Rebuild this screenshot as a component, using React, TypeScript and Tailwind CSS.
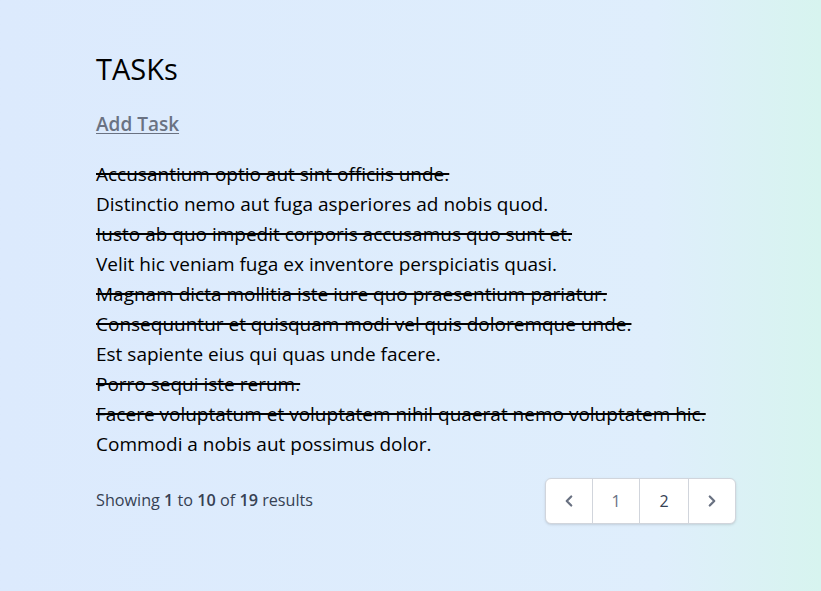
import { ChevronLeft, ChevronRight } from 'lucide-react'

interface Task {
  title: string
  done: boolean
}

const tasks: Task[] = [
  { title: 'Accusantium optio aut sint officiis unde.', done: true },
  { title: 'Distinctio nemo aut fuga asperiores ad nobis quod.', done: false },
  { title: 'Iusto ab quo impedit corporis accusamus quo sunt et.', done: true },
  { title: 'Velit hic veniam fuga ex inventore perspiciatis quasi.', done: false },
  { title: 'Magnam dicta mollitia iste iure quo praesentium pariatur.', done: true },
  { title: 'Consequuntur et quisquam modi vel quis doloremque unde.', done: true },
  { title: 'Est sapiente eius qui quas unde facere.', done: false },
  { title: 'Porro sequi iste rerum.', done: true },
  { title: 'Facere voluptatum et voluptatem nihil quaerat nemo voluptatem hic.', done: true },
  { title: 'Commodi a nobis aut possimus dolor.', done: false },
]

export default function App() {
  return (
    <div className="min-h-[591px] w-full bg-gradient-to-r from-[#dceafd] via-[#dfeefc] via-80% to-[#d7f4ef] font-['Open_Sans',sans-serif] text-black">
      <div className="pl-24 pr-[85px] pt-[51px] pb-16">
        <h1 className="text-[29px] leading-9">TASKs</h1>

        <a href="#" className="inline-block mt-[23px] text-[19px] font-semibold text-gray-500 underline underline-offset-2">
          Add Task
        </a>

        {/* Task list */}
        <ul className="mt-[20px]">
          {tasks.map((t, i) => (
            <li
              key={i}
              className={`text-[19px] leading-[30px] ${t.done ? 'line-through decoration-2' : ''}`}
            >
              {t.title}
            </li>
          ))}
        </ul>

        {/* Footer */}
        <div className="flex items-center justify-between mt-[19px]">
          <p className="text-[16.2px] text-gray-700">
            Showing <span className="font-semibold">1</span> to <span className="font-semibold">10</span> of{' '}
            <span className="font-semibold">19</span> results
          </p>
          <div className="flex h-[46px] bg-white border border-gray-300 rounded-md shadow-sm overflow-hidden">
            <button className="w-[46px] flex items-center justify-center text-gray-500">
              <ChevronLeft size={18} strokeWidth={3} />
            </button>
            <button className="w-[47px] flex items-center justify-center border-l border-gray-300 text-gray-500 text-base">
              1
            </button>
            <button className="w-[49px] flex items-center justify-center border-l border-gray-300 text-gray-700 text-base">
              2
            </button>
            <button className="w-[47px] flex items-center justify-center border-l border-gray-300 text-gray-500">
              <ChevronRight size={18} strokeWidth={3} />
            </button>
          </div>
        </div>
      </div>
    </div>
  )
}
